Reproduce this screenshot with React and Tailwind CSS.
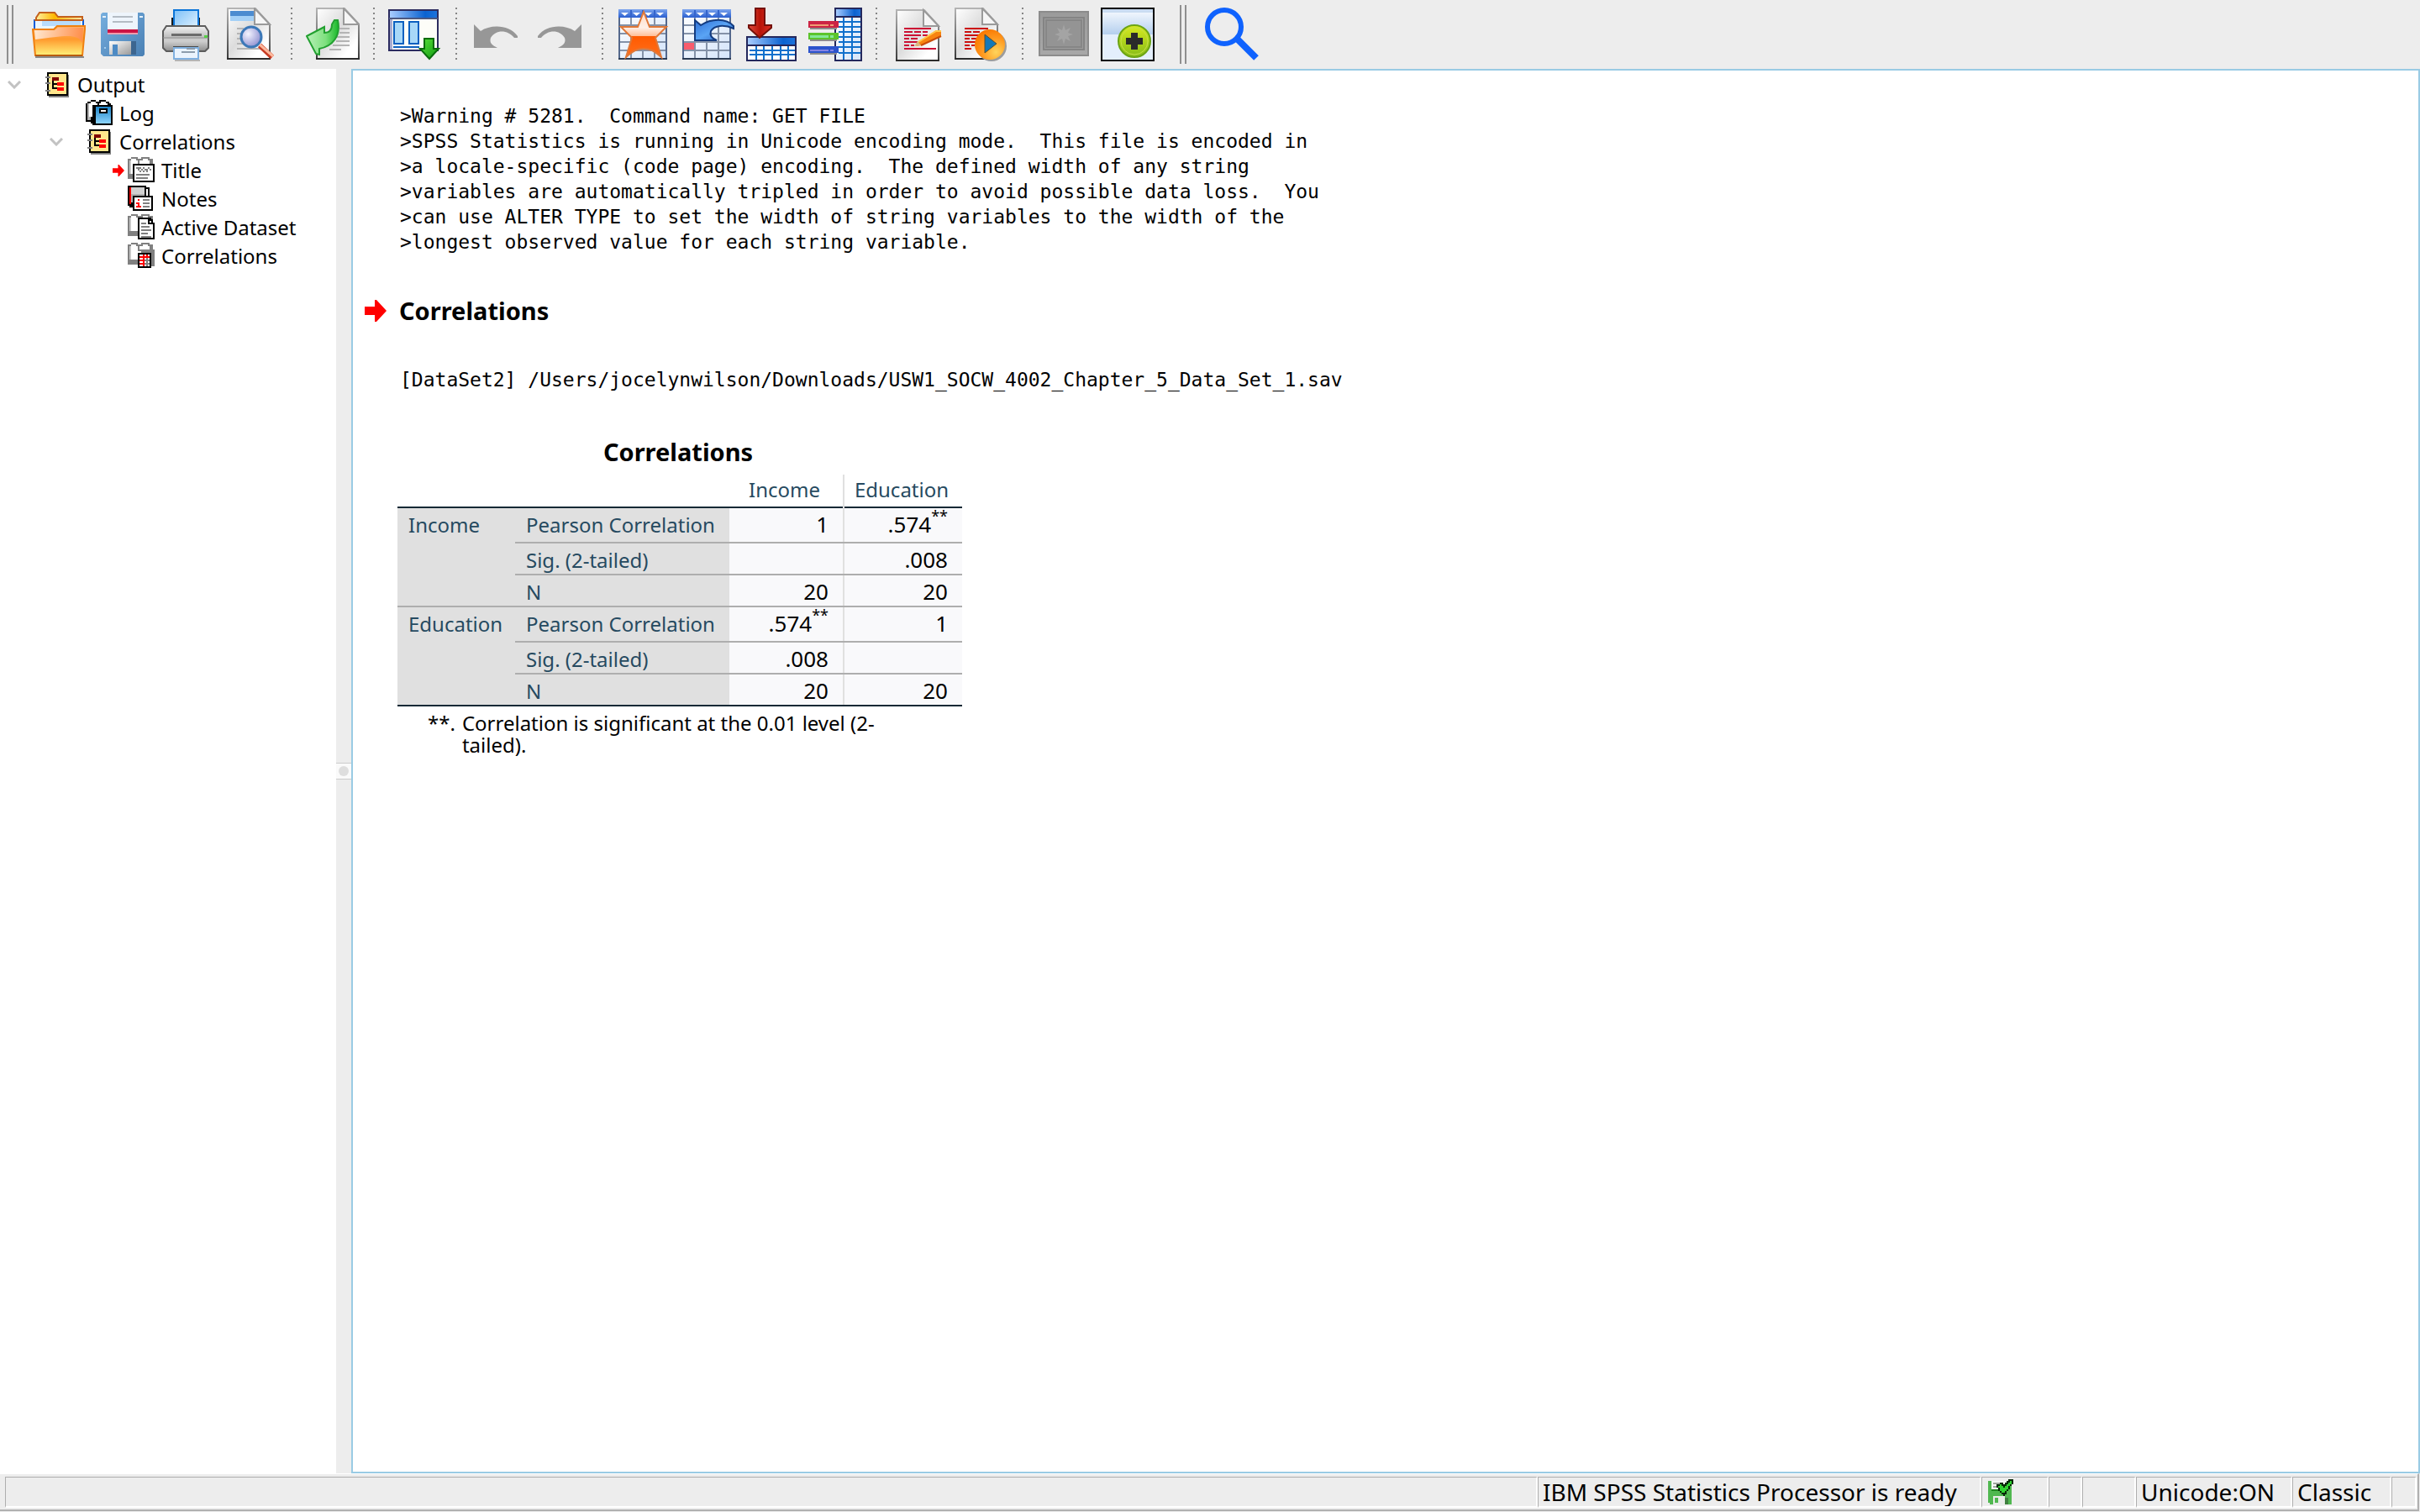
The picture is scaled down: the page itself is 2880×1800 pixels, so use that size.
import React, { useState } from "react";
import clsx from "clsx";

const WARNING_TEXT = `>Warning # 5281.  Command name: GET FILE
>SPSS Statistics is running in Unicode encoding mode.  This file is encoded in
>a locale-specific (code page) encoding.  The defined width of any string
>variables are automatically tripled in order to avoid possible data loss.  You
>can use ALTER TYPE to set the width of string variables to the width of the
>longest observed value for each string variable.`;

/* ---------- shared gradients ---------- */
function Gradients() {
  return (
    <svg width="0" height="0" className="absolute" aria-hidden="true">
      <defs>
        <linearGradient id="folderFront" x1="0" y1="0" x2="0" y2="1">
          <stop offset="0" stopColor="#ffb26b" />
          <stop offset="0.45" stopColor="#ff9a2e" />
          <stop offset="1" stopColor="#fff27a" />
        </linearGradient>
        <linearGradient id="folderShine" x1="0" y1="0" x2="1" y2="0">
          <stop offset="0" stopColor="#fff3e6" />
          <stop offset="1" stopColor="#ff8a4a" />
        </linearGradient>
        <linearGradient id="folderBack" x1="0" y1="0" x2="1" y2="0">
          <stop offset="0" stopColor="#fff0a0" />
          <stop offset="0.4" stopColor="#ffb800" />
          <stop offset="1" stopColor="#ffe9a8" />
        </linearGradient>
        <linearGradient id="diskBody" x1="0" y1="0" x2="1" y2="1">
          <stop offset="0" stopColor="#76aede" />
          <stop offset="1" stopColor="#4a80b4" />
        </linearGradient>
        <linearGradient id="metal" x1="0" y1="0" x2="1" y2="1">
          <stop offset="0" stopColor="#ffffff" />
          <stop offset="1" stopColor="#9a9a9a" />
        </linearGradient>
        <linearGradient id="printerBody" x1="0" y1="0" x2="0" y2="1">
          <stop offset="0" stopColor="#f2f2f2" />
          <stop offset="0.4" stopColor="#c2c2c2" />
          <stop offset="0.6" stopColor="#cfcfcf" />
          <stop offset="1" stopColor="#8c8c8c" />
        </linearGradient>
        <linearGradient id="paperBlue" x1="0" y1="0" x2="1" y2="1">
          <stop offset="0" stopColor="#7cc0f8" />
          <stop offset="1" stopColor="#eaf6ff" />
        </linearGradient>
        <linearGradient id="page" x1="0" y1="0" x2="1" y2="1">
          <stop offset="0" stopColor="#ffffff" />
          <stop offset="0.45" stopColor="#dcdcdc" />
          <stop offset="0.8" stopColor="#ffffff" />
        </linearGradient>
        <linearGradient id="pageEdge" x1="0" y1="0" x2="0" y2="1">
          <stop offset="0" stopColor="#b4b4b4" />
          <stop offset="1" stopColor="#3a3a3a" />
        </linearGradient>
        <linearGradient id="titleBlue" x1="0" y1="0" x2="1" y2="0">
          <stop offset="0" stopColor="#a8ccff" />
          <stop offset="0.75" stopColor="#0a62d0" />
          <stop offset="1" stopColor="#1d73dc" />
        </linearGradient>
        <linearGradient id="headBlue" x1="0" y1="0" x2="0" y2="1">
          <stop offset="0" stopColor="#7ea6ee" />
          <stop offset="1" stopColor="#2a5fd0" />
        </linearGradient>
        <linearGradient id="greenArrow" x1="0" y1="0" x2="1" y2="0">
          <stop offset="0" stopColor="#b8f0b8" />
          <stop offset="0.6" stopColor="#7ee07e" />
          <stop offset="1" stopColor="#18b828" />
        </linearGradient>
        <linearGradient id="greenDown" x1="0" y1="0" x2="1" y2="1">
          <stop offset="0" stopColor="#5be03c" />
          <stop offset="1" stopColor="#0f9a10" />
        </linearGradient>
        <linearGradient id="star" x1="0" y1="0" x2="0" y2="1">
          <stop offset="0" stopColor="#ffd9c2" />
          <stop offset="0.35" stopColor="#fff0e8" />
          <stop offset="0.53" stopColor="#ffc09a" />
          <stop offset="0.54" stopColor="#ff5a00" />
          <stop offset="1" stopColor="#ff6f1c" />
        </linearGradient>
        <linearGradient id="blueArrow" x1="0" y1="0" x2="1" y2="1">
          <stop offset="0" stopColor="#2f70d8" />
          <stop offset="0.5" stopColor="#5aa4f4" />
          <stop offset="1" stopColor="#1f50b4" />
        </linearGradient>
        <linearGradient id="redArrow" x1="0" y1="0" x2="1" y2="0">
          <stop offset="0" stopColor="#e04a3c" />
          <stop offset="0.5" stopColor="#b81408" />
          <stop offset="1" stopColor="#d83024" />
        </linearGradient>
        <linearGradient id="cells" x1="0" y1="0" x2="1" y2="1">
          <stop offset="0" stopColor="#ffffff" />
          <stop offset="1" stopColor="#d4e4fa" />
        </linearGradient>
        <radialGradient id="lens" cx="0.35" cy="0.35" r="0.7">
          <stop offset="0" stopColor="#f4f4ff" />
          <stop offset="1" stopColor="#8f90d0" />
        </radialGradient>
        <radialGradient id="orange" cx="0.7" cy="0.75" r="0.8">
          <stop offset="0" stopColor="#ffd45c" />
          <stop offset="0.55" stopColor="#ff9a20" />
          <stop offset="1" stopColor="#fa7800" />
        </radialGradient>
        <linearGradient id="lime" x1="0" y1="0" x2="0" y2="1">
          <stop offset="0" stopColor="#d8ea20" />
          <stop offset="1" stopColor="#86bc18" />
        </linearGradient>
        <linearGradient id="sky" x1="0" y1="0" x2="0" y2="1">
          <stop offset="0" stopColor="#f0f6fd" />
          <stop offset="1" stopColor="#b4cfee" />
        </linearGradient>
        <linearGradient id="grayPlate" x1="0" y1="0" x2="0" y2="1">
          <stop offset="0" stopColor="#9a9a9a" />
          <stop offset="1" stopColor="#a8a8a8" />
        </linearGradient>
        <linearGradient id="logBlue" x1="0" y1="0" x2="0" y2="1">
          <stop offset="0" stopColor="#1e84c8" />
          <stop offset="1" stopColor="#8cd4fc" />
        </linearGradient>
      </defs>
    </svg>
  );
}

/* ---------- toolbar icons, 64 x 64 ---------- */
function ToolIcon({ children }) {
  return (
    <svg viewBox="0 0 64 64" className="block size-16" aria-hidden="true">
      {children}
    </svg>
  );
}

function Page({ x = 4 }) {
  return (
    <g transform={`translate(${x} 0)`}>
      <path d="M1 1H34L51 20V61H1Z" fill="url(#page)" stroke="url(#pageEdge)" strokeWidth="2" />
      <path d="M33 1V20H51Z" fill="#f6f6f6" stroke="#9a9a9a" strokeWidth="2" />
      <path d="M0 61H52" stroke="#2c2c2c" strokeWidth="2" />
    </g>
  );
}

function OpenIcon() {
  return (
    <ToolIcon>
      <path d="M4 59H62" stroke="#8a8a8a" strokeWidth="2" />
      <path d="M5 22V12L9 6H27L31 11H60V22Z" fill="url(#folderBack)" stroke="#c4601c" strokeWidth="2" />
      <path d="M3 15H61V34H3Z" fill="#eaf5ff" stroke="#0a5cd8" strokeWidth="2" />
      <path d="M3 15H61" stroke="#c4601c" strokeWidth="2" />
      <path d="M12 16H58V22H12Z" fill="#b8dcfc" />
      <path d="M1 26H26L30 22H63V26L60 57H4Z" fill="url(#folderFront)" stroke="#f08010" strokeWidth="2" />
      <path d="M3 27H27L31 24H61L60 42C54 30 38 34 4 38Z" fill="url(#folderShine)" opacity="0.85" />
      <path d="M4 57H60" stroke="#b85c10" strokeWidth="2" />
    </ToolIcon>
  );
}

function SaveIcon() {
  return (
    <ToolIcon>
      <path d="M6 8L8 6H56L58 8V56L56 58H9L6 55Z" fill="url(#diskBody)" />
      <path d="M14 6H50V28H14Z" fill="#eef5fc" />
      <path d="M20 11H44M20 17H44" stroke="#b4bcc4" strokeWidth="2" />
      <path d="M14 26H50V30H14Z" fill="#cc1444" />
      <path d="M14 30H50V32H14Z" fill="#f09cac" />
      <path d="M8 10H12V12H8ZM52 10H56V12H52Z" fill="#e4f0fa" />
      <path d="M16 40H42V56H16Z" fill="url(#metal)" />
      <path d="M42 40H48V56H42Z" fill="#3c6690" />
      <path d="M20 44H26V56H20Z" fill="#4c8ac4" />
      <path d="M10 47H12V49H10Z" fill="#a4cbee" />
    </ToolIcon>
  );
}

function PrintIcon() {
  return (
    <ToolIcon>
      <path d="M14 12H48V30H14Z" fill="#1c1c1c" />
      <path d="M17 3H46V28H17Z" fill="url(#paperBlue)" stroke="#0a74d8" strokeWidth="2" />
      <path d="M8 22H54L58 28V48L54 52H8L4 48V28Z" fill="url(#printerBody)" stroke="#5c5c5c" strokeWidth="2" />
      <path d="M14 31H50V34H14Z" fill="#6c6c6c" />
      <path d="M4 36H58" stroke="#8a8a8a" strokeWidth="1" />
      <path d="M53 33H57V36H53Z" fill="#54d044" />
      <path d="M16 46H46V52H16Z" fill="#4a4a4a" />
      <path d="M17 48H46V61H17Z" fill="#eaf3fd" stroke="#80b0e0" strokeWidth="2" />
      <path d="M32 49H42M26 53H42" stroke="#8c9cac" strokeWidth="2" />
      <path d="M18 63H48" stroke="#b4b4b4" strokeWidth="2" />
    </ToolIcon>
  );
}

function PreviewIcon() {
  return (
    <ToolIcon>
      <Page x={4} />
      <path d="M8 4H36V16H8Z" fill="#a4d0f6" />
      <path d="M8 4H36V10H8Z" fill="#4c8cd0" />
      <path d="M16 25H24M16 31H22M16 37H22M16 43H24M16 49H48" stroke="#b4b4b4" strokeWidth="2" />
      <circle cx="33" cy="35" r="12" fill="url(#lens)" stroke="#3c78b8" strokeWidth="3" />
      <path d="M43 45L58 59" stroke="#c83c24" strokeWidth="6" />
      <path d="M43 44L59 58" stroke="#fcb89c" strokeWidth="3" />
    </ToolIcon>
  );
}

function ExportIcon() {
  return (
    <ToolIcon>
      <Page x={12} />
      <path d="M40 25H52M40 30H52M36 35H52M36 40H52M32 45H52M28 50H42" stroke="#b4b4b4" strokeWidth="2" />
      <path
        d="M1 34L22 23V30C28 30 31 27 31 20L34 15H38C42 34 32 46 16 49V56L12 55Z"
        fill="url(#greenArrow)"
        stroke="#22a030"
        strokeWidth="2"
      />
    </ToolIcon>
  );
}

function RecallIcon() {
  return (
    <ToolIcon>
      <path d="M1 3H59V51H1Z" fill="#fdfdf8" stroke="#2c2c60" strokeWidth="2" />
      <path d="M2 4H58V12H2Z" fill="url(#titleBlue)" />
      <path d="M1 13H59" stroke="#4c5880" strokeWidth="2" />
      <path d="M2 14H5V50H2Z" fill="#a8acd0" />
      <path d="M7 17H18V43H7ZM25 17H36V43H25Z" fill="#a8d8f8" stroke="#0c60c0" strokeWidth="2" />
      <path d="M6 47H37" stroke="#0c60c0" strokeWidth="2" />
      <path d="M43 37H54V49H60L49 61L38 49H43Z" fill="url(#greenDown)" stroke="#0a6c0c" strokeWidth="2" />
    </ToolIcon>
  );
}

function UndoIcon() {
  return (
    <ToolIcon>
      <path
        d="M4 20L12 28C24 20 46 20 56 34V36H52C44 26 30 26 24 36C22 42 26 45 32 48H4Z"
        fill="#979797"
      />
    </ToolIcon>
  );
}

function RedoIcon() {
  return (
    <ToolIcon>
      <path
        d="M56 20L48 28C36 20 14 20 4 34V36H8C16 26 30 26 36 36C38 42 34 45 28 48H56Z"
        fill="#979797"
      />
    </ToolIcon>
  );
}

function HeaderGrid() {
  return (
    <>
      <path d="M3 3H59V61H3Z" fill="url(#cells)" />
      <path d="M3 21H59M3 31H59M3 41H59M3 51H59M17 12V61M31 12V61M45 12V61" stroke="#8492a8" strokeWidth="2" />
      <path d="M3 3V61H59V3" fill="none" stroke="#54688c" strokeWidth="2" />
      <path d="M2 2H60V12H2Z" fill="url(#headBlue)" />
      <path d="M17 3V11M31 3V11M45 3V11" stroke="#3464cc" strokeWidth="2" />
      <path d="M5 6H14L9.500 10ZM19 6H28L23.500 10ZM33 6H42L37.500 10ZM47 6H56L51.500 10Z" fill="#ffffff" />
      <path d="M2 61H60" stroke="#2c3c54" strokeWidth="2" />
    </>
  );
}

function GotoDataIcon() {
  return (
    <ToolIcon>
      <HeaderGrid />
      <path
        d="M32 5L39 23H59L46 36L53 59C44 51 40 49 32 49C24 49 19 52 11 59L18 36L5 23H25Z"
        fill="url(#star)"
        stroke="#e07838"
        strokeWidth="2"
      />
    </ToolIcon>
  );
}

function GotoCaseIcon() {
  return (
    <ToolIcon>
      <HeaderGrid />
      <path d="M4 42H16V50H4Z" fill="#f85c6c" />
      <path
        d="M17 15L24 21C36 13 54 12 63 22V25C52 20 40 21 36 28C34 34 38 37 43 39H17Z"
        fill="url(#blueArrow)"
        stroke="#143c80"
        strokeWidth="2"
      />
    </ToolIcon>
  );
}

function GotoVariableIcon() {
  return (
    <ToolIcon>
      <path d="M3 35H61V63H3Z" fill="#ffffff" stroke="#24285c" strokeWidth="2" />
      <path d="M4 36H60V45H4Z" fill="url(#titleBlue)" />
      <path d="M3 45H61" stroke="#24285c" strokeWidth="2" />
      <path d="M6 51H60M6 56H60M14 46V62M23 46V62M33 46V62M43 46V62M52 46V62" stroke="#1070cc" strokeWidth="2" />
      <path d="M13 1H24V21H32V24L18 36L5 24V21H13Z" fill="url(#redArrow)" stroke="#741008" strokeWidth="2" />
    </ToolIcon>
  );
}

function VariablesIcon() {
  return (
    <ToolIcon>
      <path d="M32 1H63V63H32Z" fill="url(#cells)" stroke="#24285c" strokeWidth="2" />
      <path d="M33 2H62V10H33Z" fill="url(#titleBlue)" />
      <path d="M32 11H63" stroke="#24285c" strokeWidth="2" />
      <path d="M36 17H62M36 23H62M36 29H62M36 35H62M36 41H62M36 47H62M36 54H62M42 12V62M52 12V62" stroke="#1070cc" strokeWidth="2" />
      <path d="M2 24H34V26H2ZM2 38H34V40H2ZM2 54H34V56H2Z" fill="#8c8c8c" />
      <path d="M0 16H36V24H0Z" fill="#cc2444" />
      <path d="M2 20H24V22H2ZM26 20H30V22H26Z" fill="#f09c74" />
      <path d="M0 30H36V38H0Z" fill="#5cc42c" />
      <path d="M2 33H24V36H2ZM26 33H30V36H26Z" fill="#84e898" />
      <path d="M0 46H36V54H0Z" fill="#2c54cc" />
      <path d="M2 50H24V52H2ZM26 50H30V52H26Z" fill="#8484e4" />
    </ToolIcon>
  );
}

function EditSyntaxIcon() {
  return (
    <ToolIcon>
      <g transform="translate(2 2)">
        <Page x={4} />
      </g>
      <path d="M16 25H48M16 29H26M28 29H36M38 29H44M16 33H36M38 33H44M16 37H22M24 37H32M16 41H32M16 45H22M24 45H28M16 49H54" stroke="#cc1034" strokeWidth="2" />
      <path d="M32 41L54 27L60 27V34L37 45L30 46Z" fill="#f88410" />
      <path d="M33 41L54 28L60 28" fill="none" stroke="#ffc84c" strokeWidth="2" />
      <path d="M36 45L60 34" stroke="#c84c08" strokeWidth="2" />
      <path d="M28 46L32 40L36 45Z" fill="#d8b884" />
    </ToolIcon>
  );
}

function RunSyntaxIcon() {
  return (
    <ToolIcon>
      <Page x={0} />
      <path d="M12 25H40M12 29H20M22 29H30M12 33H32M12 37H18M20 37H26M12 41H26M12 45H18M20 45H24M12 49H20" stroke="#cc1010" strokeWidth="2" />
      <circle cx="44" cy="46" r="18" fill="#9c9c9c" />
      <circle cx="42" cy="44" r="18" fill="url(#orange)" />
      <path d="M36 32L50 43L36 54Z" fill="#1478b8" stroke="#5c4c2c" strokeWidth="1" />
    </ToolIcon>
  );
}

function DesignateIcon() {
  return (
    <ToolIcon>
      <path d="M3 5H61V57H3Z" fill="url(#grayPlate)" stroke="#8c8c8c" strokeWidth="2" />
      <path d="M8 12H56V50H8Z" fill="#9c9c9c" stroke="#848484" strokeWidth="2" />
      <path d="M11 15H53V47H11Z" fill="#949494" stroke="#868686" strokeWidth="2" />
      <path
        d="M32 20L34 27L40 24L37 30L43 32L37 34L40 40L34 37L32 44L30 37L24 40L27 34L21 32L27 30L24 24L30 27Z"
        fill="#a4a4a4"
      />
    </ToolIcon>
  );
}

function AddIcon() {
  return (
    <ToolIcon>
      <path d="M1 1H63V63H1Z" fill="#e4effc" stroke="#000000" strokeWidth="2" />
      <path d="M2 2H62V6H2Z" fill="#cadcf2" />
      <path d="M2 6H62V32H2Z" fill="url(#sky)" />
      <circle cx="40" cy="40" r="19" fill="url(#lime)" stroke="#6ca414" strokeWidth="2" />
      <circle cx="40" cy="40" r="16" fill="none" stroke="#c4e048" strokeWidth="1" />
      <path d="M36 30H44V36H50V44H44V50H36V44H30V36H36Z" fill="#2a2a2a" />
    </ToolIcon>
  );
}

function SearchIcon() {
  return (
    <ToolIcon>
      <circle cx="23" cy="23" r="20" fill="none" stroke="#0f62fe" strokeWidth="6" />
      <path d="M39 38L61 60" stroke="#0f62fe" strokeWidth="8" />
    </ToolIcon>
  );
}

const TOOL_GROUPS = [
  [
    { label: "Open", Icon: OpenIcon },
    { label: "Save", Icon: SaveIcon },
    { label: "Print", Icon: PrintIcon },
    { label: "Print Preview", Icon: PreviewIcon },
  ],
  [{ label: "Export", Icon: ExportIcon }],
  [{ label: "Recall dialogs", Icon: RecallIcon }],
  [
    { label: "Undo", Icon: UndoIcon, disabled: true },
    { label: "Redo", Icon: RedoIcon, disabled: true },
  ],
  [
    { label: "Go to data", Icon: GotoDataIcon },
    { label: "Go to case", Icon: GotoCaseIcon },
    { label: "Go to variable", Icon: GotoVariableIcon },
    { label: "Variables", Icon: VariablesIcon },
  ],
  [
    { label: "Edit syntax", Icon: EditSyntaxIcon },
    { label: "Run syntax", Icon: RunSyntaxIcon },
  ],
  [
    { label: "Designate window", Icon: DesignateIcon, disabled: true },
    { label: "Customize toolbar", Icon: AddIcon },
  ],
];

function Handle() {
  return <div className="h-[70px] w-2 border-x-2 border-[#8f8f8f]" />;
}

function DottedLine() {
  return (
    <svg className="block h-16 w-[2px]" viewBox="0 0 2 64" aria-hidden="true">
      <path d="M1 0V64" stroke="#858585" strokeWidth="2" strokeDasharray="2 4" />
    </svg>
  );
}

function ToolButton({ label, Icon, disabled }) {
  return (
    <button type="button" title={label} aria-label={label} disabled={disabled}>
      <Icon />
    </button>
  );
}

function Toolbar() {
  return (
    <header className="flex shrink-0 items-center bg-[#ededed] px-2 py-[6px]">
      <Handle />
      <div className="ml-[22px] flex items-center gap-4">
        {TOOL_GROUPS.map((group, i) => (
          <React.Fragment key={i}>
            {i > 0 && <DottedLine />}
            <div className="flex gap-3">
              {group.map((tool) => (
                <ToolButton key={tool.label} {...tool} />
              ))}
            </div>
          </React.Fragment>
        ))}
      </div>
      <div className="ml-[30px] flex items-center gap-[22px]">
        <Handle />
        <ToolButton label="Search" Icon={SearchIcon} />
      </div>
    </header>
  );
}

/* ---------- outline tree ---------- */
function TreeIcon({ children }) {
  return (
    <svg viewBox="0 0 16 16" className="block size-8" shapeRendering="crispEdges" aria-hidden="true">
      {children}
    </svg>
  );
}

function BookIcon() {
  return (
    <TreeIcon>
      <path d="M3 2H15V15.500H3Z" fill="#808080" />
      <path d="M2 0.500H14.500V14.500H2Z" fill="#000000" />
      <path d="M3 1.500H13.500V13.500H3Z" fill="#ffe68c" />
      <path d="M1 3H4V4H1ZM1 6.500H4V7.500H1ZM1 11H4V12H1Z" fill="#808080" />
      <path d="M5 3.500H9V5.500H5Z" fill="#800000" />
      <path d="M5 5.500H6V10.500H5ZM6 7H8V8H6ZM6 9.500H8V10.500H6Z" fill="#000000" />
      <path d="M8 6.500H12V8.500H8ZM8 9.500H12V11.500H8Z" fill="#ff0000" />
    </TreeIcon>
  );
}

function LogIcon() {
  return (
    <TreeIcon>
      <path d="M0 2H1V1H3V0H6V1H8V0H12V1H14V2H15V4H5V14H3V13H0Z" fill="#000000" />
      <path d="M3 1H6V2H7V3H5V3H4V10H2V2H3ZM9 1H12V2H13V3H8V2H9Z" fill="#ffffff" />
      <path d="M1 2H2V10H3V12H1Z" fill="#b0b0b0" />
      <path d="M5 3H16V15H4V4H5Z" fill="#000000" />
      <path d="M6 4H15V14H6Z" fill="url(#logBlue)" />
      <path d="M8 5H13V8H8Z" fill="#000000" />
      <path d="M9 6H12V7H9Z" fill="#ffffff" />
    </TreeIcon>
  );
}

function GrayBook() {
  return (
    <>
      <path d="M0 1H2V0H6V1H8V0H13V1H15V5H6V13H0Z" fill="#808080" />
      <path d="M1 2H2V10H1Z" fill="#c8c8c8" />
      <path d="M2 1H5V2H6V10H2ZM9 1H12V2H13V4H7V2H9Z" fill="#ffffff" />
    </>
  );
}

function TitleIcon() {
  return (
    <TreeIcon>
      <GrayBook />
      <path d="M3 4H16V15H3Z" fill="#000000" />
      <path d="M4 5H15V14H4Z" fill="#ffffff" />
      <path d="M5 6H8V7H5ZM9 6H10V7H9ZM12 6H13V7H12ZM6 7H7V8H6ZM8 7H9V8H8ZM10 7H12V8H10ZM13 7H14V8H13ZM7 8H8V9H7ZM9 8H10V9H9ZM11 8H12V9H11Z" fill="#808080" />
      <path d="M5 10H13V11H5ZM5 12H12V13H5Z" fill="#808080" />
    </TreeIcon>
  );
}

function NotesIcon() {
  return (
    <TreeIcon>
      <path d="M0 0H11V1H13V7H3V13H1V12H0Z" fill="#000000" />
      <path d="M1 1H2V11H1Z" fill="#ff0000" />
      <path d="M2 1H10V6H2Z" fill="#d0d0d0" />
      <path d="M2 5H10V7H3V10H2Z" fill="#b0b0b0" />
      <path d="M11 2H12V6H11Z" fill="#ffffff" />
      <path d="M3 6H15V15H3Z" fill="#000000" />
      <path d="M4 7H14V14H4Z" fill="#ffffff" />
      <path d="M6 8H7V9H6ZM5 10H7V12H8V13H5V12H6V11H5Z" fill="#ff0000" />
      <path d="M9 8H13V9H9ZM9 10H13V11H9ZM9 12H13V13H9Z" fill="#808080" />
    </TreeIcon>
  );
}

function DatasetIcon() {
  return (
    <TreeIcon>
      <GrayBook />
      <path d="M6 2H14V3H15V5H16V15H6Z" fill="#000000" />
      <path d="M7 3H12V6H15V14H7Z" fill="#ffffff" />
      <path d="M13 4H14V5H13Z" fill="#ffffff" />
      <path d="M8 5H11V6H8ZM8 7H13V8H8ZM8 9H14V10H8ZM8 11H12V12H8ZM8 13H14V14H8Z" fill="#808080" />
    </TreeIcon>
  );
}

function PivotIcon() {
  return (
    <TreeIcon>
      <GrayBook />
      <path d="M8 4H16V14H8Z" fill="#808080" />
      <path d="M6 6H14V15H6Z" fill="#000000" />
      <path d="M7 7H13V14H7Z" fill="#ffffff" />
      <path d="M7 8H13V9H7ZM7 10H10V11H7ZM7 12H10V13H7ZM9 7H10V14H9ZM11 7H12V9H11Z" fill="#ff0000" />
      <path d="M11 9H12V14H11ZM10 10H13V11H10ZM10 12H13V13H10Z" fill="#808080" />
    </TreeIcon>
  );
}

function Chevron() {
  return (
    <svg viewBox="0 0 16 10" className="block h-[10px] w-4" aria-hidden="true">
      <path d="M1 1L8 8L15 1" fill="none" stroke="#c2c2c2" strokeWidth="3" />
    </svg>
  );
}

function RedArrow({ className }) {
  return (
    <svg viewBox="0 0 13 13" className={className} aria-hidden="true">
      <path d="M0 4H6V0H7L13 6.500L7 13H6V9H0Z" fill="#ff0000" />
    </svg>
  );
}

const TREE = [
  { id: "output", label: "Output", level: 0, Icon: BookIcon, branch: true },
  { id: "log", label: "Log", level: 1, Icon: LogIcon },
  { id: "corr", label: "Correlations", level: 1, Icon: BookIcon, branch: true },
  { id: "title", label: "Title", level: 2, Icon: TitleIcon, current: true },
  { id: "notes", label: "Notes", level: 2, Icon: NotesIcon },
  { id: "dataset", label: "Active Dataset", level: 2, Icon: DatasetIcon },
  { id: "pivot", label: "Correlations", level: 2, Icon: PivotIcon },
];

const LEVEL_PADDING = ["pl-[9px]", "pl-[59px]", "pl-[109px]"];

function OutlineTree() {
  const [closed, setClosed] = useState({});

  const toggle = (id) => setClosed((prev) => ({ ...prev, [id]: !prev[id] }));

  const rows = TREE.filter((row) => {
    if (closed.output && row.level > 0) return false;
    return !(closed.corr && row.level > 1);
  });

  return (
    <nav className="w-[400px] shrink-0 bg-white pt-[2px]" aria-label="Output outline">
      <ul>
        {rows.map(({ id, label, level, Icon, branch, current }) => (
          <li key={id} className={clsx("flex h-[34px] items-center", LEVEL_PADDING[level])}>
            <span className="flex w-[43px] items-center">
              {branch && (
                <button
                  type="button"
                  aria-label={`Toggle ${label}`}
                  aria-expanded={!closed[id]}
                  onClick={() => toggle(id)}
                >
                  <Chevron />
                </button>
              )}
              {current && <RedArrow className="mr-1 ml-auto block size-[14px]" />}
            </span>
            <Icon />
            <span className="ml-2 text-2xl/8">{label}</span>
          </li>
        ))}
      </ul>
    </nav>
  );
}

function Splitter() {
  return (
    <div className="flex w-[18px] shrink-0 items-center bg-[#ededed]">
      <button
        type="button"
        aria-label="Resize outline"
        className="flex h-5 w-full items-center justify-center border-y border-[#cccccc] bg-[#fafafa]"
      >
        <span className="size-3 rounded-full bg-[#dedede]" />
      </button>
    </div>
  );
}

/* ---------- viewer ---------- */
const FLAG = "**";

const ROWS = [
  {
    variable: "Income",
    stats: [
      { name: "Pearson Correlation", values: [{ text: "1" }, { text: ".574", flag: true }] },
      { name: "Sig. (2-tailed)", values: [{ text: "" }, { text: ".008" }] },
      { name: "N", values: [{ text: "20" }, { text: "20" }] },
    ],
  },
  {
    variable: "Education",
    stats: [
      { name: "Pearson Correlation", values: [{ text: ".574", flag: true }, { text: "1" }] },
      { name: "Sig. (2-tailed)", values: [{ text: ".008" }, { text: "" }] },
      { name: "N", values: [{ text: "20" }, { text: "20" }] },
    ],
  },
];

function CorrelationTable() {
  return (
    <table className="w-[672px] table-fixed border-collapse text-2xl/8">
      <caption className="pr-1 pb-2 text-[29px]/[38px] font-bold">Correlations</caption>
      <colgroup>
        <col className="w-[140px]" />
        <col className="w-[255px]" />
        <col className="w-[136px]" />
        <col className="w-[141px]" />
      </colgroup>
      <thead>
        <tr className="h-[39px] border-b-2 border-[#152935] align-top text-[#264a60]">
          <td colSpan={2} />
          <th scope="col" className="pt-[2px] pr-1 font-normal">Income</th>
          <th scope="col" className="border-l-2 border-[#e0e0e0] border-b-[#152935] pt-[2px] pr-1 font-normal">
            Education
          </th>
        </tr>
      </thead>
      {ROWS.map(({ variable, stats }, g) => (
        <tbody key={variable}>
          {stats.map(({ name, values }, s) => {
            const line = clsx(
              "border-b-2",
              g === 1 && s === 2 ? "border-b-[#152935]" : "border-b-[#aeaeae]"
            );
            return (
              <tr key={name} className={clsx("align-top", s === 0 ? "h-[42px]" : "h-[38px]")}>
                {s === 0 && (
                  <th
                    scope="rowgroup"
                    rowSpan={3}
                    className={clsx(
                      "border-b-2 bg-[#e0e0e0] pt-1 pl-[13px] text-left font-normal text-[#264a60]",
                      g === 1 ? "border-b-[#152935]" : "border-b-[#aeaeae]"
                    )}
                  >
                    {variable}
                  </th>
                )}
                <th
                  scope="row"
                  className={clsx("bg-[#e0e0e0] pt-1 pl-[13px] text-left font-normal text-[#264a60]", line)}
                >
                  {name}
                </th>
                {values.map(({ text, flag }, v) => (
                  <td
                    key={v}
                    className={clsx(
                      "bg-[#f9f9fb] pt-[3px] pr-[17px] text-right text-[26px]/8",
                      v === 1 && "border-l-2 border-l-[#e0e0e0]",
                      line
                    )}
                  >
                    {text}
                    {flag && <sup className="align-[4px] text-lg/4">{FLAG}</sup>}
                  </td>
                ))}
              </tr>
            );
          })}
        </tbody>
      ))}
    </table>
  );
}

function Viewer() {
  return (
    <main className="min-w-0 flex-1 border-2 border-[#99cbe4] bg-white pt-[39px]">
      <pre className="pl-14 font-['DejaVu_Sans_Mono',monospace] text-[23px]/[30px]">{WARNING_TEXT}</pre>

      <div className="mt-12 flex items-center gap-[15px] pl-[14px]">
        <RedArrow className="block size-[26px]" />
        <h1 className="text-[29px]/[38px] font-bold">Correlations</h1>
      </div>

      <pre className="mt-12 pl-14 font-['DejaVu_Sans_Mono',monospace] text-[23px]/[30px]">
        [DataSet2] /Users/jocelynwilson/Downloads/USW1_SOCW_4002_Chapter_5_Data_Set_1.sav
      </pre>

      <section className="mt-[52px] ml-[53px] w-[672px]">
        <CorrelationTable />
        <p className="mt-[7px] flex gap-2 pr-16 pl-9 text-2xl/[26px]">
          <span>{FLAG}.</span>
          <span>
            Correlation is significant at the 0.01 level (2-
            <wbr />
            tailed).
          </span>
        </p>
      </section>
    </main>
  );
}

/* ---------- status bar ---------- */
function StatusCell({ className, children }) {
  return (
    <div
      className={clsx(
        "flex h-[37px] shrink-0 items-center overflow-hidden border-t border-r-2 border-b-2 border-l border-t-[#aeaeae] border-r-white border-b-white border-l-[#aeaeae] text-[28px]/9 whitespace-nowrap",
        className
      )}
    >
      {children}
    </div>
  );
}

function SavedIcon() {
  return (
    <svg viewBox="0 0 15 15" className="block size-[30px]" shapeRendering="crispEdges" role="img" aria-label="Saved">
      <path d="M0 1H14V15H1V14H0Z" fill="#50b850" />
      <path d="M2 1H12V7H2Z" fill="#f4f8f4" />
      <path d="M3 2H7V3H3ZM3 4H6V5H3Z" fill="#a0a8a0" />
      <path d="M2 6H7V7H2Z" fill="#208820" />
      <path d="M3 10H10V15H3Z" fill="#e8ece8" />
      <path d="M4 11H6V14H4Z" fill="#50b850" />
      <path d="M10 11H12V15H10Z" fill="#408040" />
      <path d="M5 3H7V2H9V3H10V2H11V1H12V0H15V3H14V4H13V6H12V7H11V9H10V10H9V9H8V8H7V7H6V5H5Z" fill="#062806" />
      <path d="M6 4H7V3H8V4H9V5H10V4H11V3H12V2H13V1H14V3H13V4H12V6H11V7H10V8H9V8H8V7H7V5H6Z" fill="#30d030" />
    </svg>
  );
}

function StatusBar() {
  return (
    <div className="shrink-0 pr-px pb-px">
      <footer className="flex border-t border-r-2 border-b-2 border-t-white border-r-[#b0b0b0] border-b-[#b0b0b0] pt-[3px] pr-px pb-[2px] pl-[6px]">
        <StatusCell className="min-w-0 flex-1 shrink" />
        <StatusCell className="w-[528px] pl-[5px]">IBM SPSS Statistics Processor is ready</StatusCell>
        <StatusCell className="w-20 pl-[7px]">
          <SavedIcon />
        </StatusCell>
        <StatusCell className="w-10" />
        <StatusCell className="w-16" />
        <StatusCell className="w-[186px] pl-[5px]">Unicode:ON</StatusCell>
        <StatusCell className="w-[118px] pl-[5px]">Classic</StatusCell>
        <StatusCell className="w-[30px]" />
      </footer>
    </div>
  );
}

export default function App() {
  return (
    <div className="flex min-h-screen flex-col bg-[#ededed] font-['Noto_Sans',sans-serif] text-black">
      <Gradients />
      <Toolbar />
      <div className="flex flex-1">
        <OutlineTree />
        <Splitter />
        <Viewer />
      </div>
      <StatusBar />
    </div>
  );
}
